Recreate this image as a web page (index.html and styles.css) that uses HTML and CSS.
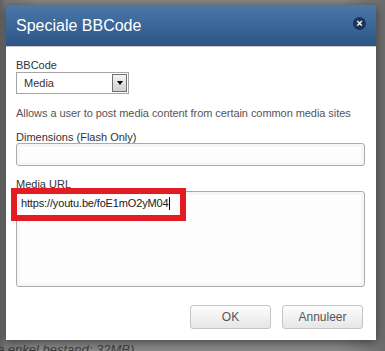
FILE: index.html
```html
<!DOCTYPE html>
<html>
<head>
<meta charset="utf-8">
<link rel="stylesheet" href="styles.css">
</head>
<body>
<div class="page">
  <div class="dialog">
    <div class="dlg-head">
      <span class="dlg-title">Speciale BBCode</span>
      <span class="dlg-close">&#215;</span>
    </div>
    <div class="dlg-body">
      <label class="lbl">BBCode</label>
      <div class="select">
        <span class="select-val">Media</span>
        <span class="select-btn"><span class="tri"></span></span>
      </div>
      <p class="desc">Allows a user to post media content from certain common media sites</p>
      <label class="lbl lbl-gap">Dimensions (Flash Only)</label>
      <div class="input"></div>
      <label class="lbl lbl-gap">Media URL</label>
      <div class="area-wrap">
        <div class="area"><span class="url">https://youtu.be/foE1mO2yM04</span><span class="caret"></span></div>
        <div class="highlight"></div>
      </div>
    </div>
    <div class="dlg-foot">
      <button class="btn">OK</button>
      <button class="btn">Annuleer</button>
    </div>
  </div>
  <div class="behind">e enkel bestand: 32MB)</div>
</div>
</body>
</html>
```

FILE: styles.css
```css
html, body {
  margin: 0;
  padding: 0;
}
body {
  width: 385px;
  height: 351px;
  overflow: hidden;
  background: linear-gradient(to right, #626262 0, #7a7a7a 6px, #8a8a8a 40px, #8a8a8a 340px, #747474 376px, #6c6c6c 385px);
  font-family: "Liberation Sans", Arial, sans-serif;
}
.page {
  padding: 5px 0 0 6px;
}
.dialog {
  width: 370px;
  height: 335px;
  background: #fff;
  box-shadow: 0 2px 10px rgba(0, 0, 0, 0.55);
  display: flex;
  flex-direction: column;
  box-sizing: border-box;
}
.dlg-head {
  height: 41px;
  border-bottom: 1px solid #c8c8c8;
  background: linear-gradient(to bottom, #4a78a9, #2d5586);
  display: flex;
  align-items: center;
  justify-content: space-between;
  padding: 0 10px 0 10px;
}
.dlg-title {
  color: #fff;
  font-size: 16px;
  margin-top: 1px;
}
.dlg-close {
  width: 13px;
  height: 13px;
  border-radius: 50%;
  background: #1b3456;
  color: #fff;
  font-size: 11px;
  font-weight: bold;
  line-height: 13px;
  text-align: center;
  margin-top: -5px;
}
.dlg-body {
  padding: 12px 11px 0 10px;
  display: flex;
  flex-direction: column;
}
.lbl {
  display: block;
  font-size: 11px;
  line-height: 12px;
  color: #333;
  margin-bottom: 1px;
}
.lbl-gap {
  margin-top: 12px;
}
.select {
  width: 113px;
  height: 22px;
  box-sizing: border-box;
  border: 1px solid #a5a5a5;
  display: flex;
  align-items: center;
  justify-content: space-between;
  background: #fff;
}
.select-val {
  font-size: 11px;
  color: #333;
  padding-left: 7px;
}
.select-btn {
  width: 15px;
  height: 18px;
  margin-right: 1px;
  box-sizing: border-box;
  border: 1px solid #707070;
  background: linear-gradient(to bottom, #f4f4f4, #d0d0d0);
  display: flex;
  align-items: center;
  justify-content: center;
}
.tri {
  width: 0;
  height: 0;
  border-left: 3.5px solid transparent;
  border-right: 3.5px solid transparent;
  border-top: 4px solid #000;
}
.desc {
  margin: 13px 0 0 0;
  font-size: 11px;
  line-height: 12px;
  color: #555;
  letter-spacing: -0.06px;
}
.input {
  height: 23px;
  box-sizing: border-box;
  border: 1px solid #aaa;
  border-radius: 3px;
  background: #fdfdfd;
  box-shadow: inset 0 0 0 3px #f6f6f6;
  margin-top: -1px;
}
.area-wrap {
  position: relative;
}
.area {
  height: 96px;
  box-sizing: border-box;
  border: 1px solid #aaa;
  border-radius: 3px;
  background: #fdfdfd;
  box-shadow: inset 0 0 0 3px #f6f6f6;
  padding: 4px 4px;
  font-size: 11px;
  line-height: 14px;
  color: #222;
  display: flex;
  align-items: flex-start;
}
.url {
  letter-spacing: -0.15px;
}
.caret {
  display: inline-block;
  width: 1px;
  height: 13px;
  background: #000;
  margin-left: 1px;
  margin-top: 1px;
}
.highlight {
  position: absolute;
  left: -5px;
  top: -3px;
  width: 175px;
  height: 33px;
  box-sizing: border-box;
  border: 6px solid #e31b23;
}
.dlg-foot {
  display: flex;
  justify-content: flex-end;
  gap: 11px;
  padding: 18px 13px 0 0;
}
.btn {
  width: 81px;
  height: 24px;
  border: 1px solid #c5c5c5;
  border-radius: 3px;
  background: linear-gradient(to bottom, #fdfdfd, #e6e6e6);
  font-family: "Liberation Sans", Arial, sans-serif;
  font-size: 12px;
  color: #555;
  padding: 0;
}
.behind {
  margin: 2px 0 0 -9px;
  font-size: 13px;
  font-style: italic;
  line-height: 16px;
  color: #3a3a3a;
}
```
